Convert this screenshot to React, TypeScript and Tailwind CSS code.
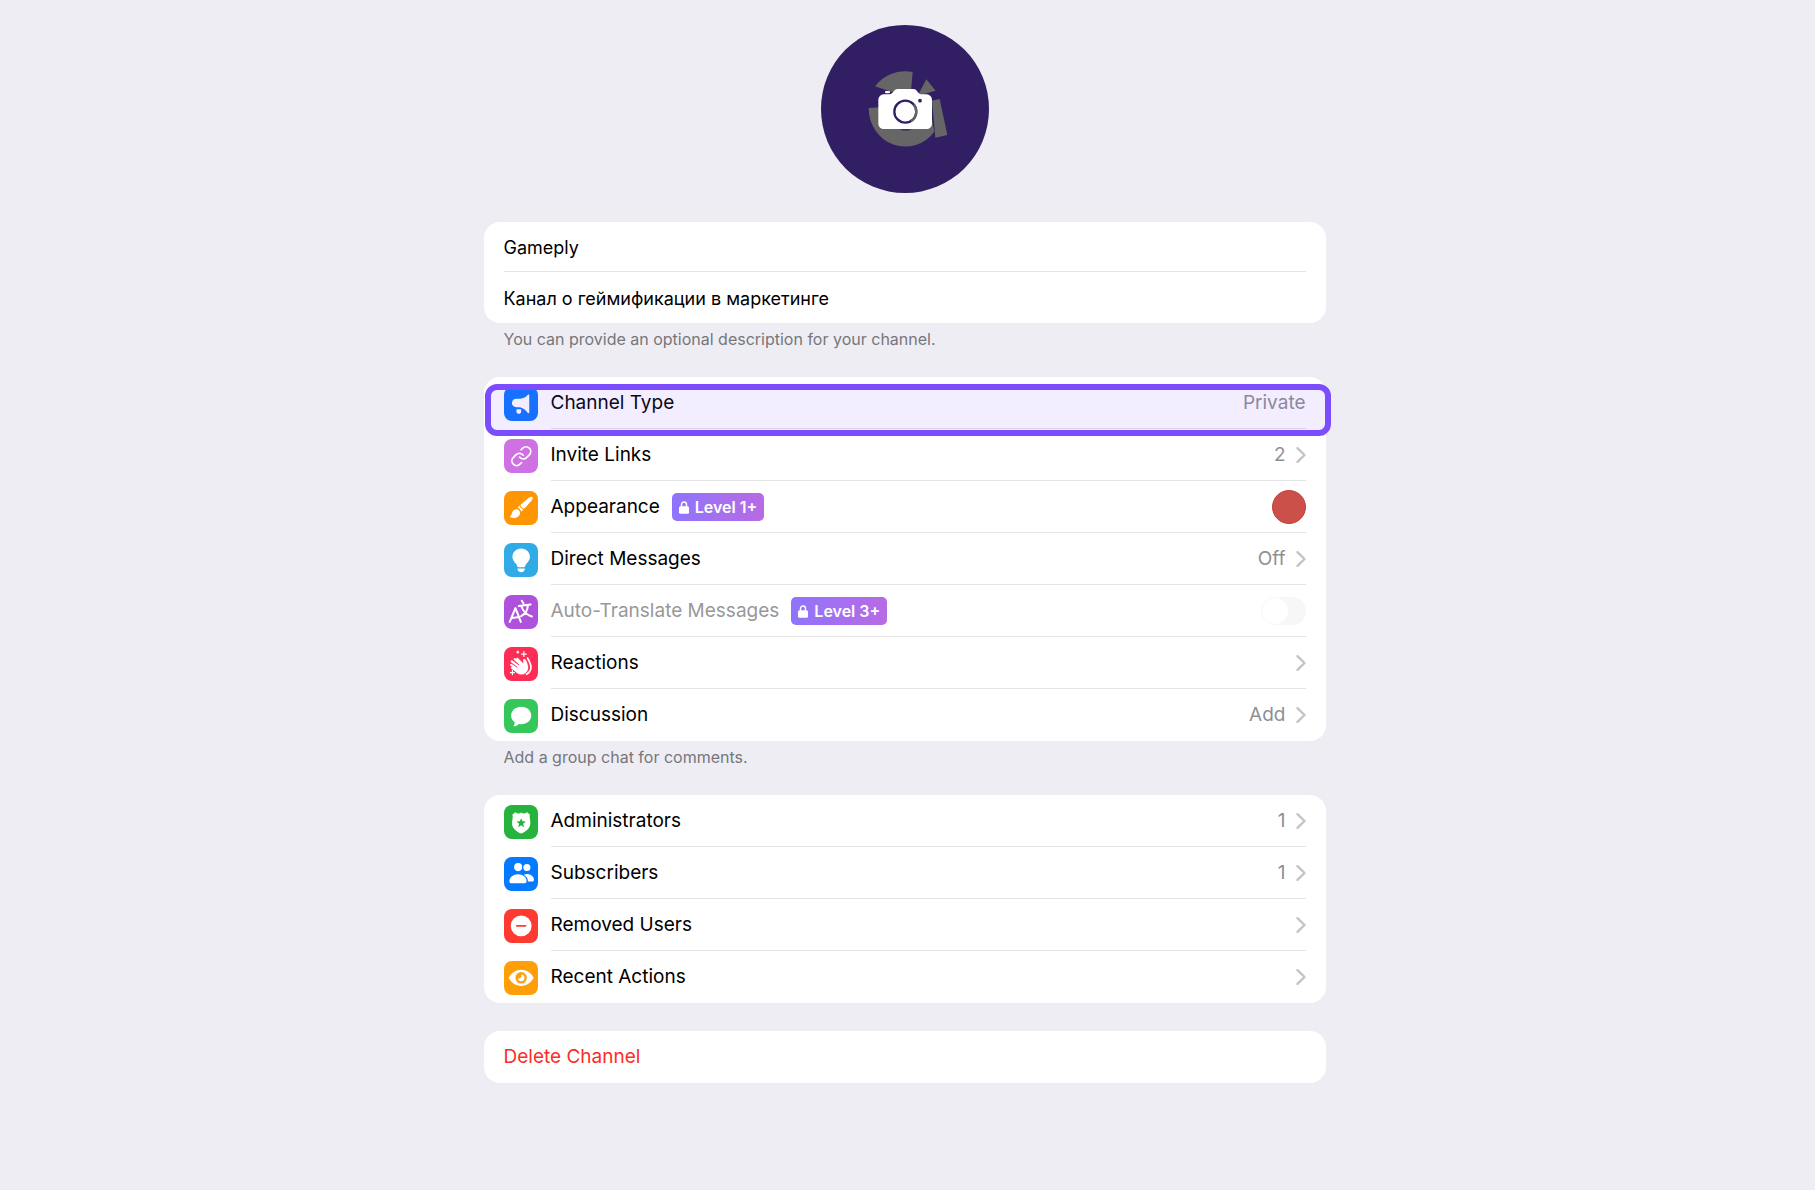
import { useState } from "react";
import type { ReactNode } from "react";

interface RowProps {
  icon: ReactNode;
  color: string;
  label: string;
  badge?: string;
  value?: string;
  chevron?: boolean;
  swatch?: boolean;
  last?: boolean;
}

const ROW_LAYOUT = "flex h-[52px] w-full items-center gap-[13px] pl-5 text-left";

function MegaphoneIcon() {
  return (
    <>
      <path d="M71 23C73 21 75 22 75 25V75C75 78 73 79 71 77C66 71 58 62 48 60H37C19 60 19 35 37 35H48C58 34 66 29 71 23Z" fill="#fff" />
      <path d="M37 66H51V73C51 82 37 82 37 73Z" fill="#fff" />
    </>
  );
}

function LinkIcon() {
  return (
    <g transform="translate(17.8 17.4) scale(2.8)" fill="none" stroke="#fff" strokeWidth="1.8" strokeLinecap="round">
      <path d="M10 13a5 5 0 0 0 7.54.54l3-3a5 5 0 0 0-7.07-7.07l-1.72 1.71" />
      <path d="M14 11a5 5 0 0 0-7.54-.54l-3 3a5 5 0 0 0 7.07 7.07l1.71-1.71" />
    </g>
  );
}

function BrushIcon() {
  return (
    <g fill="#fff">
      <path d="M84 18C87 21 85 25 81 30L63 50C61 52 58 53 56 51L50 45C48 43 49 41 51 39L74 20C78 17 82 16 84 18Z" />
      <path d="M40 50L46 43C48 48 52 53 58 55L51 62C50 56 46 52 40 50Z" />
      <path d="M37 54C43 54 48 59 48 66C47 78 30 84 19 78C17 77 18 76 19 75C24 71 22 66 26 60C28 56 32 54 37 54Z" />
    </g>
  );
}

function BulbIcon() {
  return (
    <g fill="#fff">
      <path d="M51 16C66 16 77 27 77 41C77 50 72 56 67 61C64 64 64 66 63 69C62 71 61 72 59 72H43C41 72 40 71 39 69C38 66 38 64 35 61C30 56 25 50 25 41C25 27 36 16 51 16Z" />
      <path d="M40 76H62C62 83 57 87 51 87S40 83 40 76Z" />
    </g>
  );
}

function TranslateIcon() {
  return (
    <g fill="none" stroke="#fff" strokeWidth="6" strokeLinecap="round" strokeLinejoin="round">
      <path d="M17 80L34 39L50 80M24 68L46 65" />
      <path d="M53 17L58 25M44 33L79 28M71 31C70 46 63 57 51 63M52 34C57 49 67 59 83 64" />
    </g>
  );
}

function ClapIcon() {
  return (
    <g fill="none" stroke="#fff" strokeLinecap="round">
      <path d="M24 62L42 75M21 53L44 69M23 43L46 60M32 36L50 52" strokeWidth="6.5" />
      <path d="M41 33L57 49C60 46 55 38 59 36C65 34 69 48 71 56C73 70 66 80 55 81C47 82 42 80 37 74L40 60L48 50L37 38C35 34 38 31 41 33Z" fill="#fff" strokeWidth="1" />
      <path d="M70 33C76 44 81 52 80 62C79 72 74 77 67 81" strokeWidth="5" />
      <path d="M59 14V28M52 21H66M41 12V18M38 15H44M25 70V82M19 76H31" strokeWidth="3.5" />
    </g>
  );
}

function ChatIcon() {
  return (
    <path d="M51 23C69 23 81 35 81 49C81 64 68 75 51 75C48 75 46 75 44 74C40 78 35 81 30 81C28 81 28 80 29 78C31 76 32 73 32 69C25 65 21 57 21 49C21 35 34 23 51 23Z" fill="#fff" />
  );
}

function BadgeIcon() {
  return (
    <>
      <path d="M33 21C37 26 46 26 51 22C56 26 65 26 69 21C71 25 74 27 77 28C74 36 80 46 78 58C76 70 64 80 51 85C38 80 26 70 24 58C23 46 28 36 25 28C28 27 31 25 33 21Z" fill="#fff" />
      <path d="M51 39L55 48L65 49L57 56L60 66L51 60L42 66L45 56L37 49L47 48Z" fill="#25b23d" />
    </>
  );
}

function UsersIcon() {
  return (
    <g fill="#fff">
      <circle cx="42" cy="30" r="12" />
      <circle cx="68" cy="31" r="10.5" />
      <path d="M42 51C56 51 68 60 67 72C67 76 64 78 60 78H23C18 78 16 76 16 72C16 60 28 51 42 51Z" />
      <path d="M59 53C70 46 87 54 89 65C90 70 87 73 83 73H71C72 66 67 58 59 53Z" />
    </g>
  );
}

function MinusIcon() {
  return (
    <>
      <circle cx="51" cy="50" r="31" fill="#fff" />
      <path d="M38 50H64" stroke="#fe3b30" strokeWidth="5" strokeLinecap="round" />
    </>
  );
}

function EyeIcon() {
  return (
    <>
      <path d="M14 50C22 34 36 26 51 26S80 34 88 50C80 66 66 74 51 74S22 66 14 50Z" fill="#fff" />
      <circle cx="51" cy="50" r="17" fill="#fe9f0a" />
      <path d="M51 40A10 10 0 1 1 41 51C47 55 54 48 51 40Z" fill="#fff" />
    </>
  );
}

function IconTile({ color, children }: { color: string; children: ReactNode }) {
  return (
    <span className={`mt-px size-[34px] shrink-0 overflow-hidden rounded-lg ${color}`}>
      <svg viewBox="0 0 101 101" className="size-full" aria-hidden="true">
        {children}
      </svg>
    </span>
  );
}

function Chevron() {
  return (
    <svg viewBox="0 0 10 16" className="h-4 w-[10px]" fill="none" stroke="#c4c4c6" strokeWidth="2.4" strokeLinecap="round" strokeLinejoin="round" aria-hidden="true">
      <path d="M1.5 1.2L8.5 8L1.5 14.8" />
    </svg>
  );
}

function LevelBadge({ text }: { text: string }) {
  return (
    <span className="mt-px flex h-7 items-center gap-[6px] rounded-[5px] bg-linear-to-r from-[#8e74fd] to-[#b86ae3] px-[7px] text-base font-semibold text-white">
      <svg viewBox="0 0 10 13" className="h-[13px] w-[10px]" aria-hidden="true">
        <path d="M2.5 6V3.5a2.5 2.5 0 0 1 5 0V6" fill="none" stroke="#fff" strokeWidth="1.4" />
        <rect y="5.2" width="10" height="7.6" rx="1.5" fill="#fff" />
      </svg>
      {text}
    </span>
  );
}

function SettingsRow({ icon, color, label, badge, value, chevron = true, swatch, last }: RowProps) {
  return (
    <button type="button" className={ROW_LAYOUT}>
      <IconTile color={color}>{icon}</IconTile>
      <span className={`mr-5 flex h-full flex-1 items-center justify-between ${last ? "" : "border-b border-[#e4e4e6]"}`}>
        <span className="flex items-center gap-3">
          {label}
          {badge ? <LevelBadge text={badge} /> : null}
        </span>
        <span className="flex items-center gap-[10px] text-[#8f8f92]">
          {value}
          {swatch ? <span className="size-[34px] rounded-full border border-[#c83f3b] bg-[#cb5049]" /> : null}
          {chevron ? <Chevron /> : null}
        </span>
      </span>
    </button>
  );
}

function AutoTranslateRow() {
  const [enabled, setEnabled] = useState(false);

  return (
    <label className={ROW_LAYOUT}>
      <IconTile color="bg-[#ae51dc]">
        <TranslateIcon />
      </IconTile>
      <span className="mr-5 flex h-full flex-1 items-center justify-between border-b border-[#e4e4e6]">
        <span className="flex items-center gap-3 text-[#98989a]">
          Auto-Translate Messages
          <LevelBadge text="Level 3+" />
        </span>
        <input
          type="checkbox"
          className="h-7 w-[45px] appearance-none rounded-full bg-[#f7f7f7] p-px before:block before:size-[26px] before:rounded-full before:bg-white checked:before:ml-auto"
          checked={enabled}
          onChange={(event) => setEnabled(event.target.checked)}
        />
      </span>
    </label>
  );
}

function AvatarButton() {
  return (
    <button type="button" aria-label="Change photo" className="mx-auto block size-[168px] overflow-hidden rounded-full bg-[#321e63]">
      <svg viewBox="0 0 504 504" className="size-full" aria-hidden="true">
        <g fill="#666">
          <path d="M162 184A113 113 0 0 1 275 141L270 200H210Z" />
          <path d="M143 249A110 115 0 0 0 340 320L325 240H265V312H200V245Z" />
          <path d="M316 163L344 197L290 212Z" />
          <path d="M333 227L356 222L379 330L343 338Z" />
        </g>
        <path d="M236 313H272C264 318 244 318 236 313Z" fill="#321e63" />
        <path d="M188 208H206C214 208 219 192 230 192H278C288 192 292 208 300 208H317A16 16 0 0 1 333 224V296A16 16 0 0 1 317 312H188A16 16 0 0 1 172 296V224A16 16 0 0 1 188 208Z" fill="#fff" />
        <rect x="192" y="198" width="15" height="7" rx="3" fill="#fff" />
        <circle cx="253" cy="260" r="33" fill="none" stroke="#321e63" strokeWidth="7" />
        <path d="M278 239A33 33 0 0 1 270 288" fill="none" stroke="#666" strokeWidth="7" />
        <circle cx="297" cy="227" r="5.5" fill="#321e63" />
      </svg>
    </button>
  );
}

export default function App() {
  const [name, setName] = useState("Gameply");
  const [description, setDescription] = useState("Канал о геймификации в маркетинге");

  return (
    <div className="min-h-screen bg-[#eeedf3] pt-[25px] pr-[6px] pb-10 font-['Inter',sans-serif] text-[19px] leading-6 text-black">
      <main className="mx-auto max-w-[842px]">
        <AvatarButton />

        <section className="mt-[29px] rounded-2xl bg-white px-5">
          <input
            aria-label="Channel name"
            className="block h-[50px] w-full border-b border-[#e4e4e6] pt-px text-lg outline-none"
            value={name}
            onChange={(event) => setName(event.target.value)}
          />
          <input
            aria-label="Description"
            className="block h-[51px] w-full pt-px text-lg outline-none"
            value={description}
            onChange={(event) => setDescription(event.target.value)}
          />
        </section>
        <p className="mt-1 px-5 text-base leading-6 text-[#76767b]">You can provide an optional description for your channel.</p>

        <section className="mt-[26px] rounded-2xl bg-white">
          <div className="relative">
            <SettingsRow icon={<MegaphoneIcon />} color="bg-[#0d74ff]" label="Channel Type" value="Private" chevron={false} />
            <span className="pointer-events-none absolute top-[7px] -right-[5px] -bottom-[7px] left-px rounded-xl border-6 border-[#7c4dff] bg-[#7c4dff]/10 bg-clip-padding" />
          </div>
          <SettingsRow icon={<LinkIcon />} color="bg-[#cf70e3]" label="Invite Links" value="2" />
          <SettingsRow icon={<BrushIcon />} color="bg-[#fe9502]" label="Appearance" badge="Level 1+" chevron={false} swatch />
          <SettingsRow icon={<BulbIcon />} color="bg-[#30abe5]" label="Direct Messages" value="Off" />
          <AutoTranslateRow />
          <SettingsRow icon={<ClapIcon />} color="bg-[#fe2d55]" label="Reactions" />
          <SettingsRow icon={<ChatIcon />} color="bg-[#35c759]" label="Discussion" value="Add" last />
        </section>
        <p className="mt-1 px-5 text-base leading-6 text-[#76767b]">Add a group chat for comments.</p>

        <section className="mt-[26px] rounded-2xl bg-white">
          <SettingsRow icon={<BadgeIcon />} color="bg-[#25b23d]" label="Administrators" value="1" />
          <SettingsRow icon={<UsersIcon />} color="bg-[#047aff]" label="Subscribers" value="1" />
          <SettingsRow icon={<MinusIcon />} color="bg-[#fe3b30]" label="Removed Users" />
          <SettingsRow icon={<EyeIcon />} color="bg-[#fe9f0a]" label="Recent Actions" last />
        </section>

        <button type="button" className="mt-7 block h-[52px] w-full rounded-2xl bg-white px-5 text-left text-[#fb2d25]">
          Delete Channel
        </button>
      </main>
    </div>
  );
}
